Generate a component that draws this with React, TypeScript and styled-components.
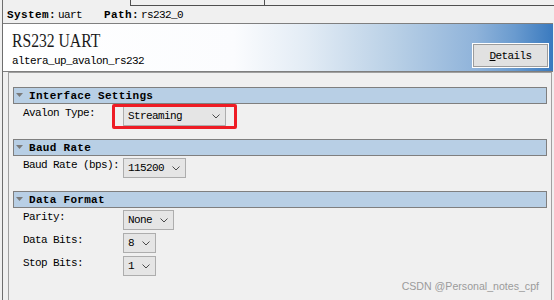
import React from "react";
import styled, { createGlobalStyle } from "styled-components";

const GlobalStyle = createGlobalStyle`
  html, body {
    margin: 0;
    padding: 0;
    background: #f0f0f0;
  }
  body {
    width: 554px;
    height: 300px;
    overflow: hidden;
    font-family: "Liberation Mono", "DejaVu Sans Mono", monospace;
    font-size: 11px;
    letter-spacing: -0.6px;
    color: #000;
  }
`;

const Frame = styled.div`
  position: relative;
  margin-left: 2px;
  height: 300px;
  border-left: 1px solid #6e6e6e;
  display: flex;
  flex-direction: column;
`;

const TopStrip = styled.div`
  display: flex;
  height: 6px;
  flex-shrink: 0;
`;

const StripCell = styled.div<{ $w?: number; $edge?: boolean }>`
  width: ${(p) => (p.$w ? `${p.$w}px` : "auto")};
  flex: ${(p) => (p.$w ? "none" : "1")};
  border-left: ${(p) => (p.$edge ? "1px solid #505050" : "none")};
  border-bottom: ${(p) => (p.$edge ? "1px solid #505050" : "none")};
`;

const InfoRow = styled.div`
  height: 17px;
  display: flex;
  align-items: center;
  padding-left: 4px;
  flex-shrink: 0;
`;

const InfoKey = styled.b`
  font-weight: bold;
  letter-spacing: 0.4px;
`;

const InfoValue = styled.span<{ $gap?: number }>`
  margin-left: 2px;
  margin-right: ${(p) => p.$gap ?? 0}px;
`;

const Header = styled.div`
  display: flex;
  justify-content: space-between;
  align-items: flex-end;
  margin-right: 1px;
  height: 47px;
  flex-shrink: 0;
  border-top: 1px solid #7f7f7f;
  border-bottom: 1px solid #7f7f7f;
  background: linear-gradient(
    90deg,
    #ffffff 0%,
    #fbfcfe 42%,
    #e3ecf5 55%,
    #b9d0e6 71%,
    #8fb3da 86%,
    #6a9bcf 93%,
    #3a7abf 100%
  );
`;

const TitleBlock = styled.div`
  align-self: stretch;
  padding: 8px 0 0 9px;
`;

const Title = styled.div`
  display: inline-block;
  font-family: "Liberation Serif", "DejaVu Serif", serif;
  font-size: 18px;
  line-height: 18px;
  letter-spacing: 0;
  color: #1a1a1a;
  transform: scaleX(0.87);
  transform-origin: left center;
`;

const Subtitle = styled.div`
  margin-top: 5px;
  line-height: 13px;
`;

const DetailsButton = styled.button`
  font-family: inherit;
  font-size: 11px;
  letter-spacing: -0.6px;
  width: 75px;
  height: 23px;
  margin: 0 5px 4px 0;
  padding: 0;
  background: #e1e1e1;
  border: 1px solid #9c9c9c;
  box-shadow: 0 0 0 1px #ffffff;
  color: #000;
  u {
    text-decoration: underline;
  }
`;

const Body = styled.div`
  flex: 1;
  margin: 0 2px 0 5px;
  border: 1px solid #a0a0a0;
  border-bottom: none;
  padding: 14px 4px 0 4px;
`;

const Group = styled.section`
  margin-bottom: 13px;
`;

const GroupBar = styled.div`
  height: 15px;
  display: flex;
  align-items: center;
  gap: 6px;
  padding-left: 2px;
  border: 1px solid #7f7f7f;
  background: #b8cfe5;
  font-weight: bold;
  letter-spacing: 0.3px;
`;

const Rows = styled.div`
  padding: 2px 0 0 10px;
  display: flex;
  flex-direction: column;
  gap: 3px;
`;

const Row = styled.div`
  display: flex;
  align-items: flex-start;
`;

const Label = styled.div`
  width: 100px;
  line-height: 14px;
  flex-shrink: 0;
`;

const ComboWrap = styled.div`
  position: relative;
`;

const Combo = styled.div<{ $w?: number }>`
  box-sizing: border-box;
  height: 20px;
  width: ${(p) => (p.$w ? `${p.$w}px` : "auto")};
  display: flex;
  align-items: center;
  justify-content: space-between;
  gap: 8px;
  padding: 0 5px 0 4px;
  border: 1px solid #adadad;
  background: #e5e5e5;
`;

const Highlight = styled.div`
  position: absolute;
  left: -11px;
  right: -11px;
  top: -2px;
  bottom: -3px;
  border: 3px solid #ee1c25;
  border-radius: 2px;
`;

const Watermark = styled.div`
  position: absolute;
  right: 15px;
  bottom: 8px;
  font-family: "Liberation Sans", Arial, sans-serif;
  font-size: 10.6px;
  letter-spacing: 0;
  color: #9b9b9b;
`;

const Chevron = () => (
  <svg width="8" height="5" viewBox="0 0 8 5">
    <path d="M0.5 0.5 L4 4 L7.5 0.5" fill="none" stroke="#4a4a4a" strokeWidth="1" />
  </svg>
);

const Collapse = () => (
  <svg width="7" height="5" viewBox="0 0 7 5">
    <path d="M0 0 L7 0 L3.5 4 Z" fill="#7a7a7a" />
  </svg>
);

type Field = { label: string; value: string; width?: number; marked?: boolean };

const groups: { title: string; fields: Field[] }[] = [
  {
    title: "Interface Settings",
    fields: [{ label: "Avalon Type:", value: "Streaming", width: 103, marked: true }],
  },
  {
    title: "Baud Rate",
    fields: [{ label: "Baud Rate (bps):", value: "115200" }],
  },
  {
    title: "Data Format",
    fields: [
      { label: "Parity:", value: "None" },
      { label: "Data Bits:", value: "8" },
      { label: "Stop Bits:", value: "1" },
    ],
  },
];

export default function App() {
  return (
    <>
      <GlobalStyle />
      <Frame>
        <TopStrip>
          <StripCell $w={127} />
          <StripCell $w={133} $edge />
          <StripCell $edge />
        </TopStrip>
        <InfoRow>
          <InfoKey>System:</InfoKey>
          <InfoValue $gap={22}>uart</InfoValue>
          <InfoKey>Path:</InfoKey>
          <InfoValue>rs232_0</InfoValue>
        </InfoRow>
        <Header>
          <TitleBlock>
            <Title>RS232 UART</Title>
            <Subtitle>altera_up_avalon_rs232</Subtitle>
          </TitleBlock>
          <DetailsButton>
            <u>D</u>etails
          </DetailsButton>
        </Header>
        <Body>
          {groups.map((g) => (
            <Group key={g.title}>
              <GroupBar>
                <Collapse />
                {g.title}
              </GroupBar>
              <Rows>
                {g.fields.map((f) => (
                  <Row key={f.label}>
                    <Label>{f.label}</Label>
                    <ComboWrap>
                      <Combo $w={f.width}>
                        <span>{f.value}</span>
                        <Chevron />
                      </Combo>
                      {f.marked && <Highlight />}
                    </ComboWrap>
                  </Row>
                ))}
              </Rows>
            </Group>
          ))}
        </Body>
        <Watermark>CSDN @Personal_notes_cpf</Watermark>
      </Frame>
    </>
  );
}
